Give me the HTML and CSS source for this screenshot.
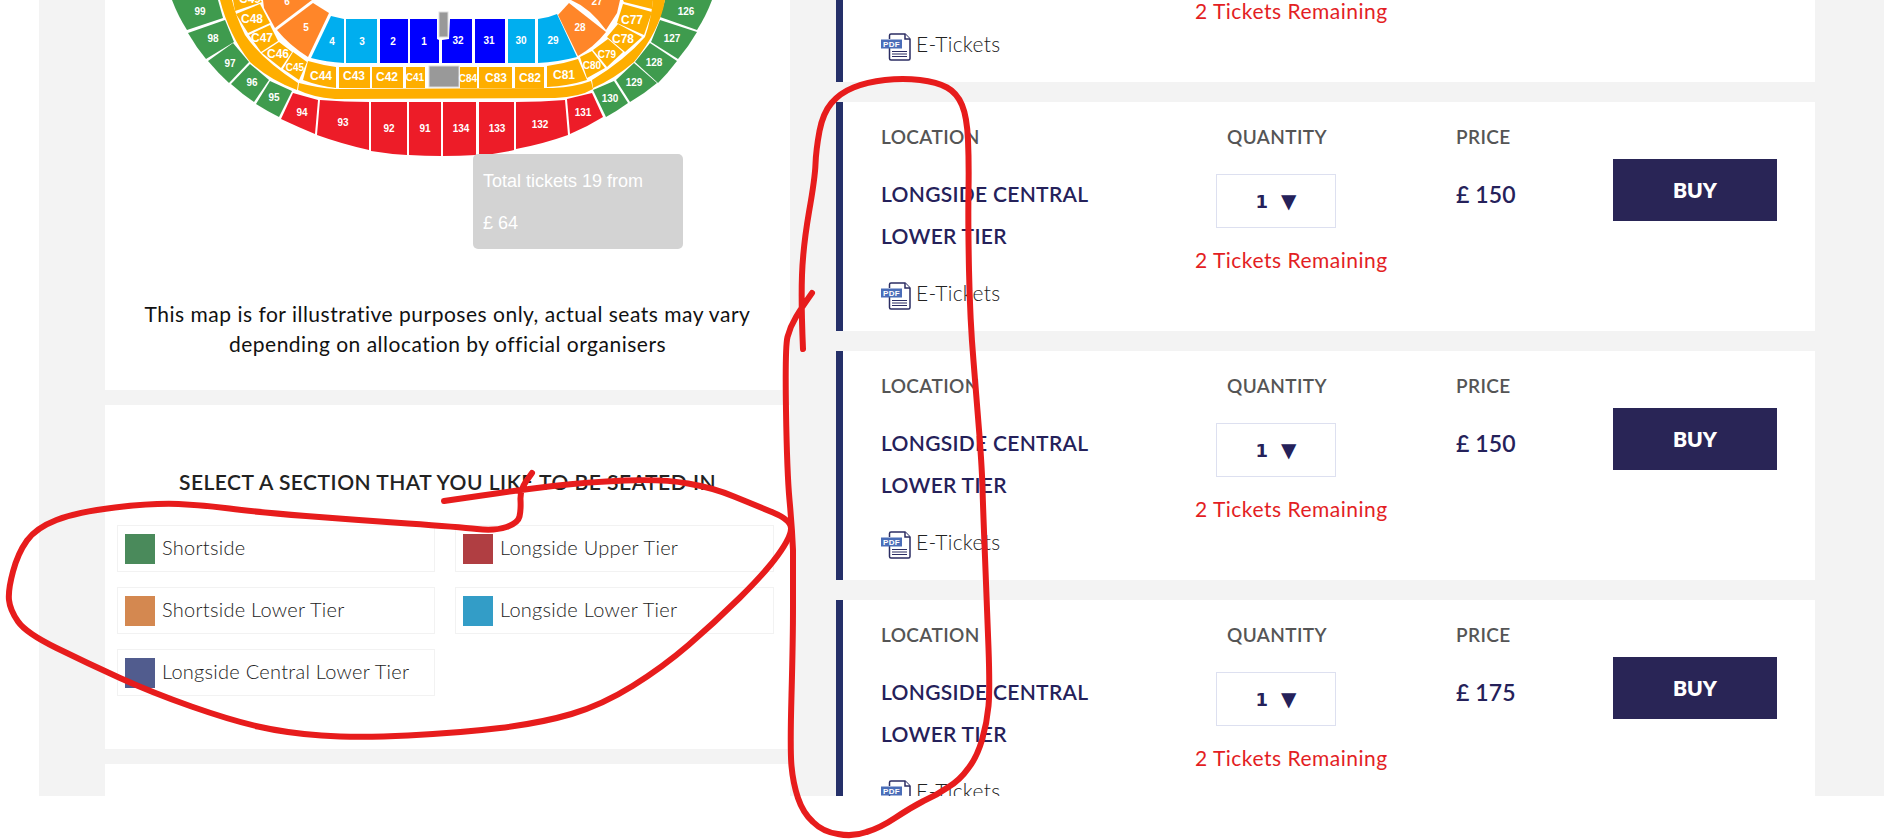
FILE: index.html
```html
<!DOCTYPE html>
<html lang="en">
<head>
<meta charset="utf-8">
<title>Tickets</title>
<link rel="stylesheet" href="styles.css">
</head>
<body>
<div class="page">
  <div class="sidebar">
    <section class="panel map-panel">
      <svg class="map" viewBox="105 0 685 160" width="685" height="160">
        <g class="green">
          <path d="M172,0L218,0L223,18L187,30Q178,16 172,0Z"/>
          <path d="M188,33L225,20L234,42L206,59Q196,47 188,33Z"/>
          <path d="M208,61L233,43L249,62L229,83Q218,73 208,61Z"/>
          <path d="M231,84L250,64L269,80L254,102Q242,94 231,84Z"/>
          <path d="M256,104L270,81L292,91L279,117Q267,111 256,104Z"/>
          <path d="M665,0L712,0Q706,16 697,30L660,17Z"/>
          <path d="M651,42L660,20L697,32Q689,46 678,59Z"/>
          <path d="M635,62L650,43L677,61Q668,73 658,83Z"/>
          <path d="M616,80L634,63L657,83Q644,94 630,102Z"/>
          <path d="M593,90L614,81L628,103Q617,111 606,117Z"/>
        </g>
        <g class="red">
          <path d="M293,93L318,100L315,134Q298,127 281,119Z"/>
          <path d="M320,100Q345,102 369,102L369,150Q342,144 317,135Z"/>
          <path d="M371,102L407,102L407,155Q389,154 371,151Z"/>
          <path d="M409,102L441,102L441,156Q425,156 409,155Z"/>
          <path d="M443,102L476,102L476,155Q460,156 443,156Z"/>
          <path d="M479,102L514,102L514,150Q497,154 479,155Z"/>
          <path d="M516,102Q541,102 565,100L568,135Q543,144 516,149Z"/>
          <path d="M567,99L592,93L603,117Q587,127 570,134Z"/>
        </g>
        <g class="amber">
          <path d="M220,0Q229,35 250,62Q270,80 297,90L298,83Q262,60 245,35Q236,17 232,0Z"/>
          <path d="M299,83Q318,88 335,89L553,88Q575,87 591,81L593,89Q580,97 555,98L335,99Q312,97 298,90Z"/>
          <path d="M592,80Q625,60 645,37Q651,20 653,0L665,0Q660,30 634,62Q614,79 593,88Z"/>
          <path d="M233,0L260,0L262,2L235,11Z"/>
          <path d="M236,14L260,4L270,23L248,33Z"/>
          <path d="M249,35L270,25L278,41L261,52Z"/>
          <path d="M262,53L279,42L292,52L281,68Z"/>
          <path d="M283,69L293,52L307,62L299,80Z"/>
          <path d="M308,61Q322,65 336,67L336,88Q319,86 303,80Z"/>
          <rect x="339" y="67" width="31" height="21"/>
          <rect x="372" y="67" width="31" height="21"/>
          <rect x="406" y="67" width="19" height="21"/>
          <rect x="460" y="67" width="17" height="21"/>
          <rect x="479" y="67" width="33" height="21"/>
          <rect x="515" y="67" width="29" height="21"/>
          <path d="M547,66Q563,64 578,59L587,80Q568,86 547,87Z"/>
          <path d="M580,57L592,51L605,68L587,78Z"/>
          <path d="M593,50L608,39L623,52L607,67Z"/>
          <path d="M607,37L618,24L642,37L625,52Z"/>
          <path d="M617,23L623,4L652,12L644,35Z"/>
          <path d="M623,0L653,0L652,9L624,2Z"/>
        </g>
        <g class="orange">
          <path d="M263,0L312,0L275,28L264,8Z"/>
          <path d="M277,30L313,3L329,13L308,57Q289,45 277,30Z"/>
          <path d="M571,0L620,0L617,13L606,30Q590,8 571,0Z"/>
          <path d="M558,15L569,3L606,32Q594,47 578,56Z"/>
        </g>
        <g class="sky">
          <path d="M331,16L344,19L344,63Q326,62 311,58Z"/>
          <rect x="346" y="19" width="31" height="44"/>
          <rect x="508" y="19" width="27" height="44"/>
          <path d="M538,19Q548,18 557,14L577,57Q558,62 538,63Z"/>
        </g>
        <g class="blue">
          <rect x="380" y="19" width="28" height="44"/>
          <path d="M410,19L437,19L437,39L439,40L439,63L410,63Z"/>
          <path d="M450,19L472,19L472,63L442,63L442,40L449,39Z"/>
          <rect x="475" y="19" width="30" height="44"/>
        </g>
        <rect class="block" x="429" y="66" width="30" height="21"/>
        <rect class="block" x="439" y="12" width="9" height="25"/>
        <g class="num">
          <text x="200" y="15">99</text><text x="213" y="42">98</text><text x="230" y="67">97</text><text x="252" y="86">96</text><text x="274" y="101">95</text>
          <text x="302" y="116">94</text><text x="343" y="126">93</text><text x="389" y="132">92</text><text x="425" y="132">91</text><text x="461" y="132">134</text><text x="497" y="132">133</text><text x="540" y="128">132</text><text x="583" y="116">131</text>
          <text x="610" y="102">130</text><text x="634" y="86">129</text><text x="654" y="66">128</text><text x="672" y="42">127</text><text x="686" y="15">126</text>
          <text x="306" y="31">5</text><text x="287" y="5">6</text><text x="597" y="5">27</text><text x="580" y="31">28</text>
          <text x="332" y="45">4</text><text x="362" y="45">3</text><text x="393" y="45">2</text><text x="424" y="45">1</text><text x="458" y="44">32</text><text x="489" y="44">31</text><text x="521" y="44">30</text><text x="553" y="44">29</text>
        </g>
        <g class="cnum">
          <text x="250" y="3">C49</text><text x="252" y="23">C48</text><text x="262" y="42">C47</text><text x="278" y="58">C46</text><text x="321" y="80">C44</text><text x="354" y="80">C43</text><text x="387" y="81">C42</text>
          <text x="496" y="82">C83</text><text x="530" y="82">C82</text><text x="564" y="79">C81</text><text x="623" y="43">C78</text><text x="632" y="24">C77</text>
        </g>
        <g class="cnum small">
          <text x="295" y="71">C45</text><text x="415" y="81">C41</text><text x="468" y="82">C84</text><text x="592" y="69">C80</text><text x="607" y="58">C79</text>
        </g>
      </svg>
      <div class="map-tip">
        <p>Total tickets 19 from</p>
        <p>£ 64</p>
      </div>
      <p class="map-note">This map is for illustrative purposes only, actual seats may vary<br>depending on allocation by official organisers</p>
    </section>

    <section class="panel legend-panel">
      <h2>SELECT A SECTION THAT YOU LIKE TO BE SEATED IN</h2>
      <ul class="legend">
        <li><span class="swatch s-green"></span>Shortside</li>
        <li><span class="swatch s-red"></span>Longside Upper Tier</li>
        <li><span class="swatch s-orange"></span>Shortside Lower Tier</li>
        <li><span class="swatch s-blue"></span>Longside Lower Tier</li>
        <li><span class="swatch s-navy"></span>Longside Central Lower Tier</li>
      </ul>
    </section>

    <section class="panel rest-panel"></section>
  </div>

  <div class="tickets">
    <article class="card">
      <div class="col"><h3>LOCATION</h3><p class="name">LONGSIDE CENTRAL<br>LOWER TIER</p>
        <p class="etk"><svg class="pdf" viewBox="0 0 30 28" width="30" height="28"><path class="pdf-doc" d="M8.5,6V2.5Q8.500,1 10,1H24L29,6V25.500Q29,27 27.500,27H10Q8.500,27 8.500,25.500V15"/><path class="pdf-doc" d="M24,1V6H29"/><rect class="pdf-tag" x="0" y="6.500" width="21" height="9"/><text class="pdf-txt" x="10.500" y="14">PDF</text><path class="pdf-lines" d="M11,18.500H26M11,21H26M11,23.500H26"/></svg>E-Tickets</p></div>
      <div class="col"><h3 class="qty-h">QUANTITY</h3><div class="qty"><b>1</b><span>▼</span></div><p class="left">2 Tickets Remaining</p></div>
      <div class="col"><h3>PRICE</h3><p class="price">£ 150</p></div>
      <button class="buy" type="button">BUY</button>
    </article>
    <article class="card">
      <div class="col"><h3>LOCATION</h3><p class="name">LONGSIDE CENTRAL<br>LOWER TIER</p>
        <p class="etk"><svg class="pdf" viewBox="0 0 30 28" width="30" height="28"><path class="pdf-doc" d="M8.5,6V2.5Q8.500,1 10,1H24L29,6V25.500Q29,27 27.500,27H10Q8.500,27 8.500,25.500V15"/><path class="pdf-doc" d="M24,1V6H29"/><rect class="pdf-tag" x="0" y="6.500" width="21" height="9"/><text class="pdf-txt" x="10.500" y="14">PDF</text><path class="pdf-lines" d="M11,18.500H26M11,21H26M11,23.500H26"/></svg>E-Tickets</p></div>
      <div class="col"><h3 class="qty-h">QUANTITY</h3><div class="qty"><b>1</b><span>▼</span></div><p class="left">2 Tickets Remaining</p></div>
      <div class="col"><h3>PRICE</h3><p class="price">£ 150</p></div>
      <button class="buy" type="button">BUY</button>
    </article>
    <article class="card">
      <div class="col"><h3>LOCATION</h3><p class="name">LONGSIDE CENTRAL<br>LOWER TIER</p>
        <p class="etk"><svg class="pdf" viewBox="0 0 30 28" width="30" height="28"><path class="pdf-doc" d="M8.5,6V2.5Q8.500,1 10,1H24L29,6V25.500Q29,27 27.500,27H10Q8.500,27 8.500,25.500V15"/><path class="pdf-doc" d="M24,1V6H29"/><rect class="pdf-tag" x="0" y="6.500" width="21" height="9"/><text class="pdf-txt" x="10.500" y="14">PDF</text><path class="pdf-lines" d="M11,18.500H26M11,21H26M11,23.500H26"/></svg>E-Tickets</p></div>
      <div class="col"><h3 class="qty-h">QUANTITY</h3><div class="qty"><b>1</b><span>▼</span></div><p class="left">2 Tickets Remaining</p></div>
      <div class="col"><h3>PRICE</h3><p class="price">£ 150</p></div>
      <button class="buy" type="button">BUY</button>
    </article>
    <article class="card">
      <div class="col"><h3>LOCATION</h3><p class="name">LONGSIDE CENTRAL<br>LOWER TIER</p>
        <p class="etk"><svg class="pdf" viewBox="0 0 30 28" width="30" height="28"><path class="pdf-doc" d="M8.5,6V2.5Q8.500,1 10,1H24L29,6V25.500Q29,27 27.500,27H10Q8.500,27 8.500,25.500V15"/><path class="pdf-doc" d="M24,1V6H29"/><rect class="pdf-tag" x="0" y="6.500" width="21" height="9"/><text class="pdf-txt" x="10.500" y="14">PDF</text><path class="pdf-lines" d="M11,18.500H26M11,21H26M11,23.500H26"/></svg>E-Tickets</p></div>
      <div class="col"><h3 class="qty-h">QUANTITY</h3><div class="qty"><b>1</b><span>▼</span></div><p class="left">2 Tickets Remaining</p></div>
      <div class="col"><h3>PRICE</h3><p class="price">£ 175</p></div>
      <button class="buy" type="button">BUY</button>
    </article>
  </div>
</div>

<svg class="scribble" viewBox="0 0 1884 840" width="1884" height="840">
  <path d="M803,349Q801,303 802,275Q803,247 809,212Q815,178 815.500,164Q816,150 819.500,131Q823,113 831.500,103Q840,93 853.500,87.500Q867,82 885,80Q903,78 920,80Q937,82 947,87.500Q957,93 962,105Q967,117 968,140Q969,163 968.500,191Q968,220 969,270Q970,320 973.500,361Q977,403 979.500,436Q982,470 982.500,488Q983,507 985,557Q987,607 988.500,648Q990,690 988.500,706Q987,723 982,740Q977,757 968.500,768Q960,780 948.500,787Q937,795 923.500,801Q910,808 895,818Q880,828 866.500,832Q853,837 838,834Q823,832 813,822Q803,813 798,798Q793,783 791.500,766Q790,750 791.500,695Q793,640 793,606Q793,573 793,550Q792,527 789.500,500Q787,473 786,410Q785,347 787.500,337Q790,327 796,317Q802,307 812,293"/>
  <path d="M444,501L482,495.500Q520,490 553,486Q587,482 625,480.500Q663,479 688,483.500Q714,488 734,496.500Q755,505 773,512.500Q791,520 791,528.500Q791,537 778,555Q765,573 739.500,598Q714,623 688.500,645Q663,667 632.500,686Q602,705 571.500,714Q541,723 500,728Q459,733 408,735.500Q357,738 321.500,735.500Q286,733 258,726.500Q230,720 191.500,706.500Q153,693 120,678Q87,663 56.500,648Q26,633 18,621.500Q10,610 9,600Q8,590 13,571.500Q18,553 27,540.500Q36,528 56.500,520Q77,512 115,507.500Q153,503 178.500,504Q204,505 229.500,508.500Q255,512 306,516Q357,520 408,523.500Q459,527 477,529Q495,531 506.500,527Q518,523 519.500,516.500Q521,510 520.500,500Q520,490 526,481.500L532,473"/>
</svg>
</body>
</html>
```
FILE: styles.css
```css
* { box-sizing: border-box; }
html, body { margin: 0; padding: 0; }
body {
  position: relative;
  height: 840px;
  overflow: hidden;
  background: #fff;
  font-family: Lato, "Open Sans", sans-serif;
}
p, h2, h3, ul { margin: 0; padding: 0; }

.page {
  display: flex;
  gap: 46px;
  align-items: flex-start;
  height: 796px;
  margin-left: 39px;
  padding-left: 66px;
  overflow: hidden;
  background: #f3f3f3;
}

/* left column */
.sidebar {
  display: flex;
  flex-direction: column;
  gap: 15px;
  flex: 0 0 685px;
}
.panel { position: relative; background: #fff; }
.map-panel { height: 390px; }
.map { display: block; }
.map-tip {
  position: absolute;
  left: 368px;
  top: 154px;
  width: 210px;
  height: 95px;
  padding: 6px 10px;
  border-radius: 5px;
  background: #d3d3d3;
  color: #fff;
  font-family: "Liberation Sans", Arial, sans-serif;
  font-size: 18px;
  line-height: 42px;
}
.map-note {
  margin-top: 139px;
  text-align: center;
  font-size: 21px;
  letter-spacing: 0.5px;
  line-height: 30px;
  color: #111;
}
.green path { fill: #3f9b4e; }
.red path { fill: #ed1c28; }
.amber path, .amber rect { fill: #feae00; }
.orange path { fill: #ff8629; }
.sky path, .sky rect { fill: #00aeef; }
.blue path, .blue rect { fill: #0000ff; }
.block { fill: #999; stroke: #ddd; stroke-width: 1; }
.num text, .cnum text {
  fill: #fff;
  font-family: "Liberation Sans", Arial, sans-serif;
  font-weight: 700;
  text-anchor: middle;
}
.num text { font-size: 10px; }
.cnum text { font-size: 12px; }
.cnum.small text { font-size: 10px; }

.legend-panel { padding: 62px 12px 53px; }
.legend-panel h2 {
  margin-bottom: 28px;
  text-align: center;
  font-size: 21px;
  font-weight: 600;
  letter-spacing: 0.5px;
  line-height: 30px;
  color: #222;
}
.legend {
  display: grid;
  grid-template-columns: 318px 319px;
  column-gap: 20px;
  row-gap: 15px;
  list-style: none;
}
.legend li {
  display: flex;
  align-items: center;
  gap: 7px;
  height: 47px;
  padding: 0 0 4px 7px;
  border: 1px solid #f2f2f2;
  font-size: 20px;
  font-weight: 300;
  letter-spacing: 0.27px;
  color: #222;
  line-height: 24px;
}
.swatch { flex: 0 0 30px; align-self: flex-start; height: 30px; margin-top: 8px; }
.s-green { background: #4a8a5b; }
.s-red { background: #b03e42; }
.s-orange { background: #d48850; }
.s-blue { background: #339dc7; }
.s-navy { background: #515c8e; }
.rest-panel { height: 200px; }

/* right column */
.tickets {
  display: flex;
  flex-direction: column;
  gap: 20px;
  flex: 0 0 979px;
  margin-top: -147px;
}
.card {
  display: grid;
  grid-template-columns: 315px 260px 157px 164px;
  align-items: start;
  height: 229px;
  padding: 23px 38px 0;
  border-left: 7px solid #253069;
  background: #fff;
}
.col h3 {
  font-size: 19px;
  font-weight: 600;
  letter-spacing: 0.4px;
  line-height: 24px;
  color: #555;
}
.name {
  margin-top: 24px;
  font-size: 21px;
  font-weight: 600;
  letter-spacing: 0.3px;
  line-height: 42px;
  color: #25215a;
}
.etk {
  display: flex;
  align-items: center;
  gap: 5px;
  height: 30px;
  margin-top: 20px;
  font-size: 21px;
  font-weight: 300;
  letter-spacing: 0.3px;
  color: #222;
}
.pdf { flex: none; margin-top: 8px; }
.pdf-doc { fill: #fff; stroke: #2b2d63; stroke-width: 1.5; }
.pdf-tag { fill: #4a6db8; }
.pdf-txt {
  fill: #fff;
  font-family: "Liberation Sans", Arial, sans-serif;
  font-size: 8px;
  font-weight: 700;
  text-anchor: middle;
}
.pdf-lines { fill: none; stroke: #2b2d63; stroke-width: 1.2; }
.qty-h { margin-left: 31px; }
.qty {
  display: flex;
  align-items: center;
  justify-content: center;
  gap: 13px;
  width: 120px;
  height: 54px;
  margin: 25px 0 0 20px;
  border: 1px solid #dde0f0;
  color: #25215a;
  font-family: "DejaVu Sans", sans-serif;
  font-size: 18px;
}
.qty span { font-size: 20px; line-height: 1; }
.left {
  margin: 17px 0 0 -1px;
  font-size: 21px;
  letter-spacing: 0.5px;
  line-height: 30px;
  color: #e31e24;
}
.price {
  margin-top: 24px;
  font-size: 23px;
  font-weight: 600;
  letter-spacing: 0.1px;
  line-height: 42px;
  color: #25215a;
}
.buy {
  width: 164px;
  height: 62px;
  margin-top: 34px;
  padding: 0 0 2px;
  border: 0;
  background: #292556;
  color: #fff;
  font-family: inherit;
  font-size: 21px;
  font-weight: 800;
}

/* hand-drawn annotation on top of the screenshot */
.scribble {
  position: absolute;
  left: 0;
  top: 0;
  pointer-events: none;
}
.scribble path {
  fill: none;
  stroke: #e71c1c;
  stroke-width: 6;
  stroke-linecap: round;
  stroke-linejoin: round;
}
```
